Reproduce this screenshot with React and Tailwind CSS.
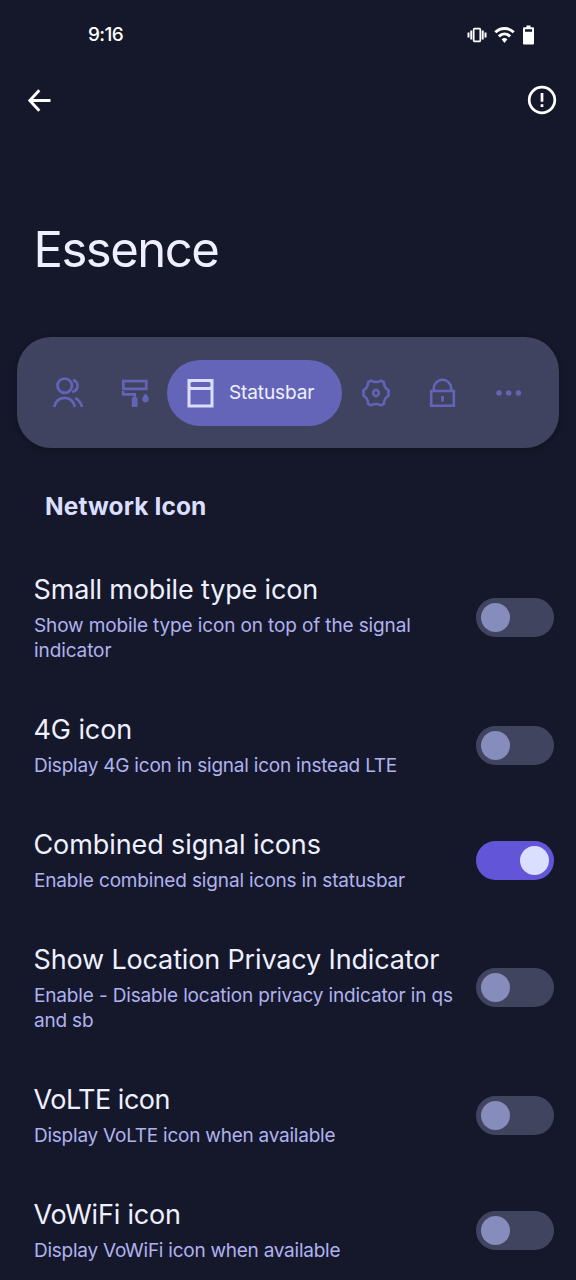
import React from 'react';

const settings = [
  { title: 'Small mobile type icon', t: 'tracking-[-0.16px]', lines: [['Show mobile type icon on top of the signal', 'tracking-[-0.13px]'], ['indicator', 'tracking-[-0.1px]']], on: false },
  { title: '4G icon', t: 'tracking-[-0.1px]', lines: [['Display 4G icon in signal icon instead LTE', 'tracking-[-0.22px]']], on: false },
  { title: 'Combined signal icons', t: 'tracking-[-0.1px]', lines: [['Enable combined signal icons in statusbar', 'tracking-[-0.15px]']], on: true },
  { title: 'Show Location Privacy Indicator', t: 'tracking-[-0.15px]', lines: [['Enable - Disable location privacy indicator in qs', 'tracking-[-0.15px]'], ['and sb', 'tracking-[-0.2px]']], on: false },
  { title: 'VoLTE icon', t: 'tracking-[-0.5px]', lines: [['Display VoLTE icon when available', 'tracking-[-0.24px]']], on: false },
  { title: 'VoWiFi icon', t: 'tracking-[-0.2px]', lines: [['Display VoWiFi icon when available', 'tracking-[-0.25px]']], on: false },
];

function StatusBar() {
  return (
    <div className="flex h-[70px] shrink-0 items-center justify-between pr-[42px] pl-[88px]">
      <span className="pt-px text-[19px] font-medium tracking-[-0.6px] text-white">9:16</span>
      <div className="flex items-center text-white">
        <svg className="h-[18px] w-5" viewBox="0 0 20 18" fill="currentColor">
          <path d="M0.500 6.500h2v5h-2zM3.300 4.500h2v9h-2zM14.700 4.500h2v9h-2zM17.500 6.500h2v5h-2z" />
          <rect x="6.700" y="2.700" width="6.600" height="12.600" rx="0.700" fill="none" stroke="currentColor" strokeWidth="1.700" />
        </svg>
        <svg className="ml-[7px] h-[18px] w-[21px]" viewBox="0 0 21 18" fill="none" stroke="currentColor" strokeWidth="3">
          <path d="M1.300 6.300C6.500 1.200 14.500 1.200 19.700 6.300" />
          <path d="M4.900 10.400c3.300-3.200 7.900-3.200 11.200 0" />
          <path d="M7.600 13.300q2.900-2.400 5.800 0L10.500 17z" fill="currentColor" stroke="none" />
        </svg>
        <svg className="ml-[8px] h-5 w-[11px]" viewBox="0 0 11 20">
          <path fill="currentColor" fillRule="evenodd" d="M3.500 0.500h4v1.700H10q1 0 1 1V18.500q0 1-1 1H1q-1 0-1-1V3.200q0-1 1-1h2.500zM2 4.200v2.600h7V4.200z" />
        </svg>
      </div>
    </div>
  );
}

function Toggle({ on }) {
  return (
    <div className={`flex h-[39px] w-[78px] shrink-0 items-center rounded-full px-[5px] ${on ? 'justify-end bg-[#6355d8]' : 'bg-[#41445f]'}`}>
      <div className={`size-[29px] rounded-full ${on ? 'bg-[#dadeff]' : 'bg-[#868cbc]'}`} />
    </div>
  );
}

function TabBar() {
  return (
    <div className="mx-[17px] flex h-[111px] shrink-0 items-center rounded-[34px] bg-[#40435f] text-[#6364b8] shadow-[0_2px_6px_rgba(0,0,0,0.25)]">
      <svg className="ml-[35px] h-[32px] w-[32px]" viewBox="0 0 32 32" fill="none" stroke="currentColor" strokeWidth="2.700">
        <circle cx="12.700" cy="8.700" r="7.200" />
        <path d="M2.200 30c1.400-5.800 5.300-9.200 10.400-9.200s9 3.400 10.400 9.200" />
        <path d="M21 3.200c2.500 0.400 4.600 2.700 4.600 5.600s-2.100 5.300-5.400 6.200M23.300 20.900c3.400 2 5.500 4.900 6.700 9.100" />
      </svg>
      <svg className="ml-[37px] h-[30px] w-[28px]" viewBox="0 0 28 30" fill="none" stroke="currentColor" strokeWidth="2.700">
        <path d="M2.300 3.200h23v7.600h-23z" />
        <path d="M2.200 13v3.300h11.500v4.300" />
        <path d="M10.800 19.500h5.700V29h-5.700zM24.500 15.500c1.900 2.200 3.300 3.900 3.300 5.600a3.300 3.300 0 0 1-6.600 0c0-1.700 1.400-3.400 3.300-5.600z" fill="currentColor" stroke="none" />
      </svg>
      <div className="ml-[18px] flex h-[66px] w-[175px] items-center rounded-full bg-[#6465b9] pl-[20px]">
        <svg className="h-[30px] w-[27px] text-[#dadeff]" viewBox="0 0 27 30">
          <path fill="currentColor" fillRule="evenodd" d="M0.500 1h26v28.500h-26zM3.500 5.500v2Q3.500 9 5 9h17q1.500 0 1.500-1.500v-2Q23.500 4 22 4H5Q3.500 4 3.500 5.500zM3.500 12v14.500h20V12z" />
        </svg>
        <span className="ml-[15px] pt-[2px] text-[19px] tracking-[-0.1px] whitespace-nowrap text-[#eff0ff]">Statusbar</span>
      </div>
      <svg className="ml-[19px] h-[30px] w-[30px]" viewBox="0 0 30 30" fill="none" stroke="currentColor" strokeWidth="2.500" strokeLinejoin="round">
        <path d="M9.800 2.700Q15 5.500 20.200 2.700L23 4.300Q22.700 9.800 27.800 12.300L27.300 15L27.800 17.700Q22.700 20.200 23 25.700L20.200 27.300Q15 24.500 9.800 27.300L7 25.700Q7.300 20.200 2.200 17.700L2.700 15L2.200 12.300Q7.300 9.800 7 4.300Z" />
        <circle cx="15" cy="15" r="2.900" />
      </svg>
      <svg className="ml-[38px] h-[30px] w-[27px]" viewBox="0 0 27 30" fill="none" stroke="currentColor" strokeWidth="2.600">
        <path d="M2.200 13h22.600v14.800H2.200zM4.800 13v-2.500a8.700 8.700 0 0 1 17.400 0V13" />
        <path d="M13.500 18v5.500" strokeWidth="2.800" />
      </svg>
      <svg className="ml-[40px] h-[6px] w-[28px]" viewBox="0 0 28 6" fill="currentColor">
        <circle cx="3" cy="3" r="2.700" />
        <circle cx="12.700" cy="3" r="2.700" />
        <circle cx="22.400" cy="3" r="2.700" />
      </svg>
    </div>
  );
}

export default function App() {
  return (
    <div className="flex h-[1280px] w-[576px] flex-col overflow-hidden bg-[#15182a] font-['Inter','Roboto',sans-serif]">
      <StatusBar />
      <header className="flex h-[60px] shrink-0 items-center justify-between pr-[19px] pl-[27px] text-white">
        <svg className="h-6 w-6" viewBox="0 0 24 24" fill="none" stroke="currentColor" strokeWidth="2.900">
          <path d="M12.300 2.300L2.800 12.500l9.500 10.200M2.800 12.500h20.700" />
        </svg>
        <svg className="h-[30px] w-[30px]" viewBox="0 0 30 30" fill="none" stroke="currentColor" strokeWidth="2.700">
          <circle cx="15" cy="15" r="12.800" />
          <path d="M15 8v8.700M15 19.300v2.800" />
        </svg>
      </header>
      <h1 className="mt-[87px] mb-[54px] shrink-0 pl-[33.500px] text-[49px] leading-[66px] font-normal tracking-[-1.500px] text-[#eff0ff]">Essence</h1>
      <TabBar />
      <h2 className="mt-[43px] mb-[26.500px] shrink-0 pl-[45px] text-[24.500px] leading-[30px] font-bold tracking-[0.1px] text-[#dadeff]">Network Icon</h2>
      <main className="shrink-0">
        {settings.map((s) => (
          <section key={s.title} className={`flex items-center justify-between pr-[22px] pl-[34px] ${s.lines.length > 1 ? 'h-[140px]' : 'h-[115px]'}`}>
            <div className="flex flex-col gap-[5px] whitespace-nowrap">
              <h3 className={`-ml-[0.500px] text-[27px] leading-[36px] font-normal text-[#eff0ff] ${s.t}`}>{s.title}</h3>
              <div className="text-[19px] leading-[25px] font-normal text-[#b0b2f0]">
                {s.lines.map(([line, tracking]) => (
                  <p key={line} className={tracking}>{line}</p>
                ))}
              </div>
            </div>
            <Toggle on={s.on} />
          </section>
        ))}
      </main>
    </div>
  );
}
